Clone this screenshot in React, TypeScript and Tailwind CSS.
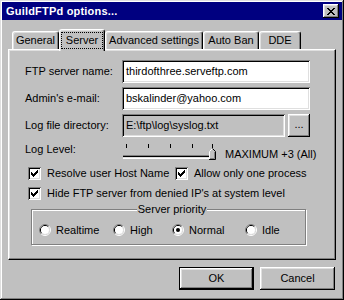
import React from 'react';

const raised =
  'shadow-[inset_-1px_-1px_#000,inset_1px_1px_#fff,inset_-2px_-2px_#808080,inset_2px_2px_#dfdfdf]';
const sunken =
  'shadow-[inset_1px_1px_#808080,inset_-1px_-1px_#fff,inset_2px_2px_#000,inset_-2px_-2px_#dfdfdf]';

const CheckMark = () => (
  <svg width="7" height="7" viewBox="0 0 7 7" shapeRendering="crispEdges">
    <rect x="6" y="0" width="1" height="1" />
    <rect x="5" y="1" width="2" height="1" />
    <rect x="0" y="2" width="1" height="1" />
    <rect x="4" y="2" width="3" height="1" />
    <rect x="0" y="3" width="2" height="1" />
    <rect x="3" y="3" width="3" height="1" />
    <rect x="0" y="4" width="5" height="1" />
    <rect x="1" y="5" width="3" height="1" />
    <rect x="2" y="6" width="1" height="1" />
  </svg>
);

const Checkbox = ({ label, className = '' }: { label: string; className?: string }) => (
  <div className={`flex items-center h-[13px] ${className}`}>
    <span className={`w-[13px] h-[13px] shrink-0 bg-white flex items-center justify-center ${sunken}`}>
      <CheckMark />
    </span>
    <span className="ml-[6px] leading-[13px] whitespace-nowrap">{label}</span>
  </div>
);

const Radio = ({ label, checked = false, width }: { label: string; checked?: boolean; width?: string }) => (
  <div className={`flex items-center ${width ?? ''}`}>
    <svg width="12" height="12" viewBox="0 0 12 12" className="shrink-0">
      <path d="M2.11 9.89 A5.5 5.5 0 0 1 9.89 2.11" stroke="#808080" fill="none" />
      <path d="M9.89 2.11 A5.5 5.5 0 0 1 2.11 9.89" stroke="#fff" fill="none" />
      <path d="M2.82 9.18 A4.5 4.5 0 0 1 9.18 2.82" stroke="#000" fill="none" />
      <path d="M9.18 2.82 A4.5 4.5 0 0 1 2.82 9.18" stroke="#dfdfdf" fill="none" />
      <circle cx="6" cy="6" r="4" fill="#fff" />
      {checked && <circle cx="6" cy="6" r="2" fill="#000" />}
    </svg>
    <span className="ml-[5px] leading-[13px]">{label}</span>
  </div>
);

const Slider = () => (
  <svg width="96" height="20" viewBox="0 0 96 20" shapeRendering="crispEdges" className="shrink-0">
    {[4, 26, 48, 70, 90].map((x) => (
      <rect key={x} x={x} y="3" width="1" height="4" fill="#000" />
    ))}
    <rect x="1" y="14" width="88" height="1" fill="#808080" />
    <rect x="1" y="15" width="88" height="1" fill="#000" />
    <rect x="1" y="16" width="88" height="1" fill="#dfdfdf" />
    <rect x="1" y="17" width="88" height="1" fill="#fff" />
    <polygon points="87,18 87,10 90,7 94,11 94,18" fill="#c0c0c0" stroke="none" />
    <polyline points="87.5,18 87.5,10.5 90.5,7.5" fill="none" stroke="#fff" shapeRendering="auto" />
    <polyline points="90.5,7.5 93.5,10.5 93.5,18.5 87,18.5" fill="none" stroke="#000" shapeRendering="auto" />
    <polyline points="92.5,11 92.5,17.5 88,17.5" fill="none" stroke="#808080" shapeRendering="auto" />
  </svg>
);

const Tab = ({ label, width, active = false }: { label: string; width: string; active?: boolean }) =>
  active ? (
    <div
      className={`${width} relative z-10 -mb-[2px] h-[22px] bg-[#c0c0c0] border-l border-t border-white border-r border-r-black rounded-t-[3px] shadow-[inset_-1px_0_#808080,inset_1px_1px_#dfdfdf] flex items-center justify-center`}
    >
      <span className="border border-dotted border-black px-[4px] leading-[15px] h-[17px] flex items-center">{label}</span>
    </div>
  ) : (
    <div
      className={`${width} h-[18px] border-l border-t border-white border-r border-r-black rounded-t-[3px] shadow-[inset_-1px_0_#808080,inset_1px_1px_#dfdfdf] flex items-center justify-center whitespace-nowrap`}
    >
      {label}
    </div>
  );

const TextField = ({ value, width, disabled = false }: { value: string; width: string; disabled?: boolean }) => (
  <div
    className={`${width} h-[23px] flex items-center pl-[4px] whitespace-nowrap overflow-hidden ${disabled ? 'bg-[#c0c0c0]' : 'bg-white'} ${sunken}`}
  >
    {value}
  </div>
);

export default function App() {
  return (
    <div
      className={`w-[344px] h-[300px] p-[2px] flex flex-col bg-[#c0c0c0] text-black text-[11px] font-['Liberation_Sans',Arial,sans-serif] shadow-[inset_-1px_-1px_#000,inset_1px_1px_#dfdfdf,inset_-2px_-2px_#808080,inset_2px_2px_#fff]`}
    >
      {/* title bar */}
      <div className="h-[18px] bg-[#000080] flex items-center pl-[4px] pr-[3px]">
        <span className="text-white font-bold text-[11px] tracking-[0.2px]">GuildFTPd options...</span>
        <div className={`ml-auto w-[16px] h-[14px] bg-[#c0c0c0] flex items-center justify-center ${raised}`}>
          <svg width="8" height="7" viewBox="0 0 8 7" shapeRendering="crispEdges">
            <rect x="0" y="0" width="2" height="1" />
            <rect x="6" y="0" width="2" height="1" />
            <rect x="1" y="1" width="2" height="1" />
            <rect x="5" y="1" width="2" height="1" />
            <rect x="2" y="2" width="4" height="1" />
            <rect x="3" y="3" width="2" height="1" />
            <rect x="2" y="4" width="4" height="1" />
            <rect x="1" y="5" width="2" height="1" />
            <rect x="5" y="5" width="2" height="1" />
            <rect x="0" y="6" width="2" height="1" />
            <rect x="6" y="6" width="2" height="1" />
          </svg>
        </div>
      </div>

      <div className="px-[6px] pt-[9px] flex flex-col">
        {/* tabs */}
        <div className="h-[20px] flex items-end pl-[4px]">
          <Tab label="General" width="w-[47px]" />
          <Tab label="Server" width="w-[46px]" active />
          <Tab label="Advanced settings" width="w-[98px]" />
          <Tab label="Auto Ban" width="w-[56px]" />
          <Tab label="DDE" width="w-[42px]" />
        </div>

        {/* panel */}
        <div className="h-[211px] border border-t-white border-l-white border-r-black border-b-black shadow-[inset_-1px_-1px_#808080,inset_1px_1px_#dfdfdf] pt-[10px] pl-[16px] flex flex-col">
          <div className="flex items-center h-[23px]">
            <span className="w-[97px]">FTP server name:</span>
            <TextField value="thirdofthree.serveftp.com" width="w-[188px]" />
          </div>
          <div className="flex items-center h-[23px] mt-[4px]">
            <span className="w-[97px]">Admin's e-mail:</span>
            <TextField value="bskalinder@yahoo.com" width="w-[188px]" />
          </div>
          <div className="flex items-center h-[23px] mt-[4px]">
            <span className="w-[97px]">Log file directory:</span>
            <TextField value="E:\ftp\log\syslog.txt" width="w-[163px]" disabled />
            <div className={`ml-[3px] w-[22px] h-[23px] flex items-center justify-center pb-[3px] ${raised}`}>...</div>
          </div>

          <div className="flex items-start h-[20px] mt-[4px]">
            <span className="w-[97px] leading-[13px] mt-[2px]">Log Level:</span>
            <Slider />
            <span className="ml-[7px] leading-[13px] mt-[7px] whitespace-nowrap">MAXIMUM +3 (All)</span>
          </div>

          <div className="flex mt-[6px] pl-[3px]">
            <Checkbox label="Resolve user Host Name" className="w-[147px]" />
            <Checkbox label="Allow only one process" />
          </div>
          <Checkbox label="Hide FTP server from denied IP's at system level" className="mt-[7px] pl-[3px]" />

          <fieldset className="mt-[3px] ml-[6px] w-[275px] border border-[#808080] shadow-[inset_1px_1px_#fff,1px_1px_#fff] pt-[8px] pb-[8px] pl-[7px]">
            <legend className="mx-auto px-[1px] leading-[13px] bg-[#c0c0c0]">Server priority</legend>
            <div className="flex items-center h-[12px]">
              <Radio label="Realtime" width="w-[74px]" />
              <Radio label="High" width="w-[59px]" />
              <Radio label="Normal" width="w-[73px]" checked />
              <Radio label="Idle" />
            </div>
          </fieldset>
        </div>

        {/* buttons */}
        <div className="flex justify-end gap-[6px] mt-[7px] pr-[1px]">
          <div className={`w-[75px] h-[23px] border border-black flex items-center justify-center ${raised}`}>OK</div>
          <div className={`w-[75px] h-[23px] flex items-center justify-center ${raised}`}>Cancel</div>
        </div>
      </div>
    </div>
  );
}
